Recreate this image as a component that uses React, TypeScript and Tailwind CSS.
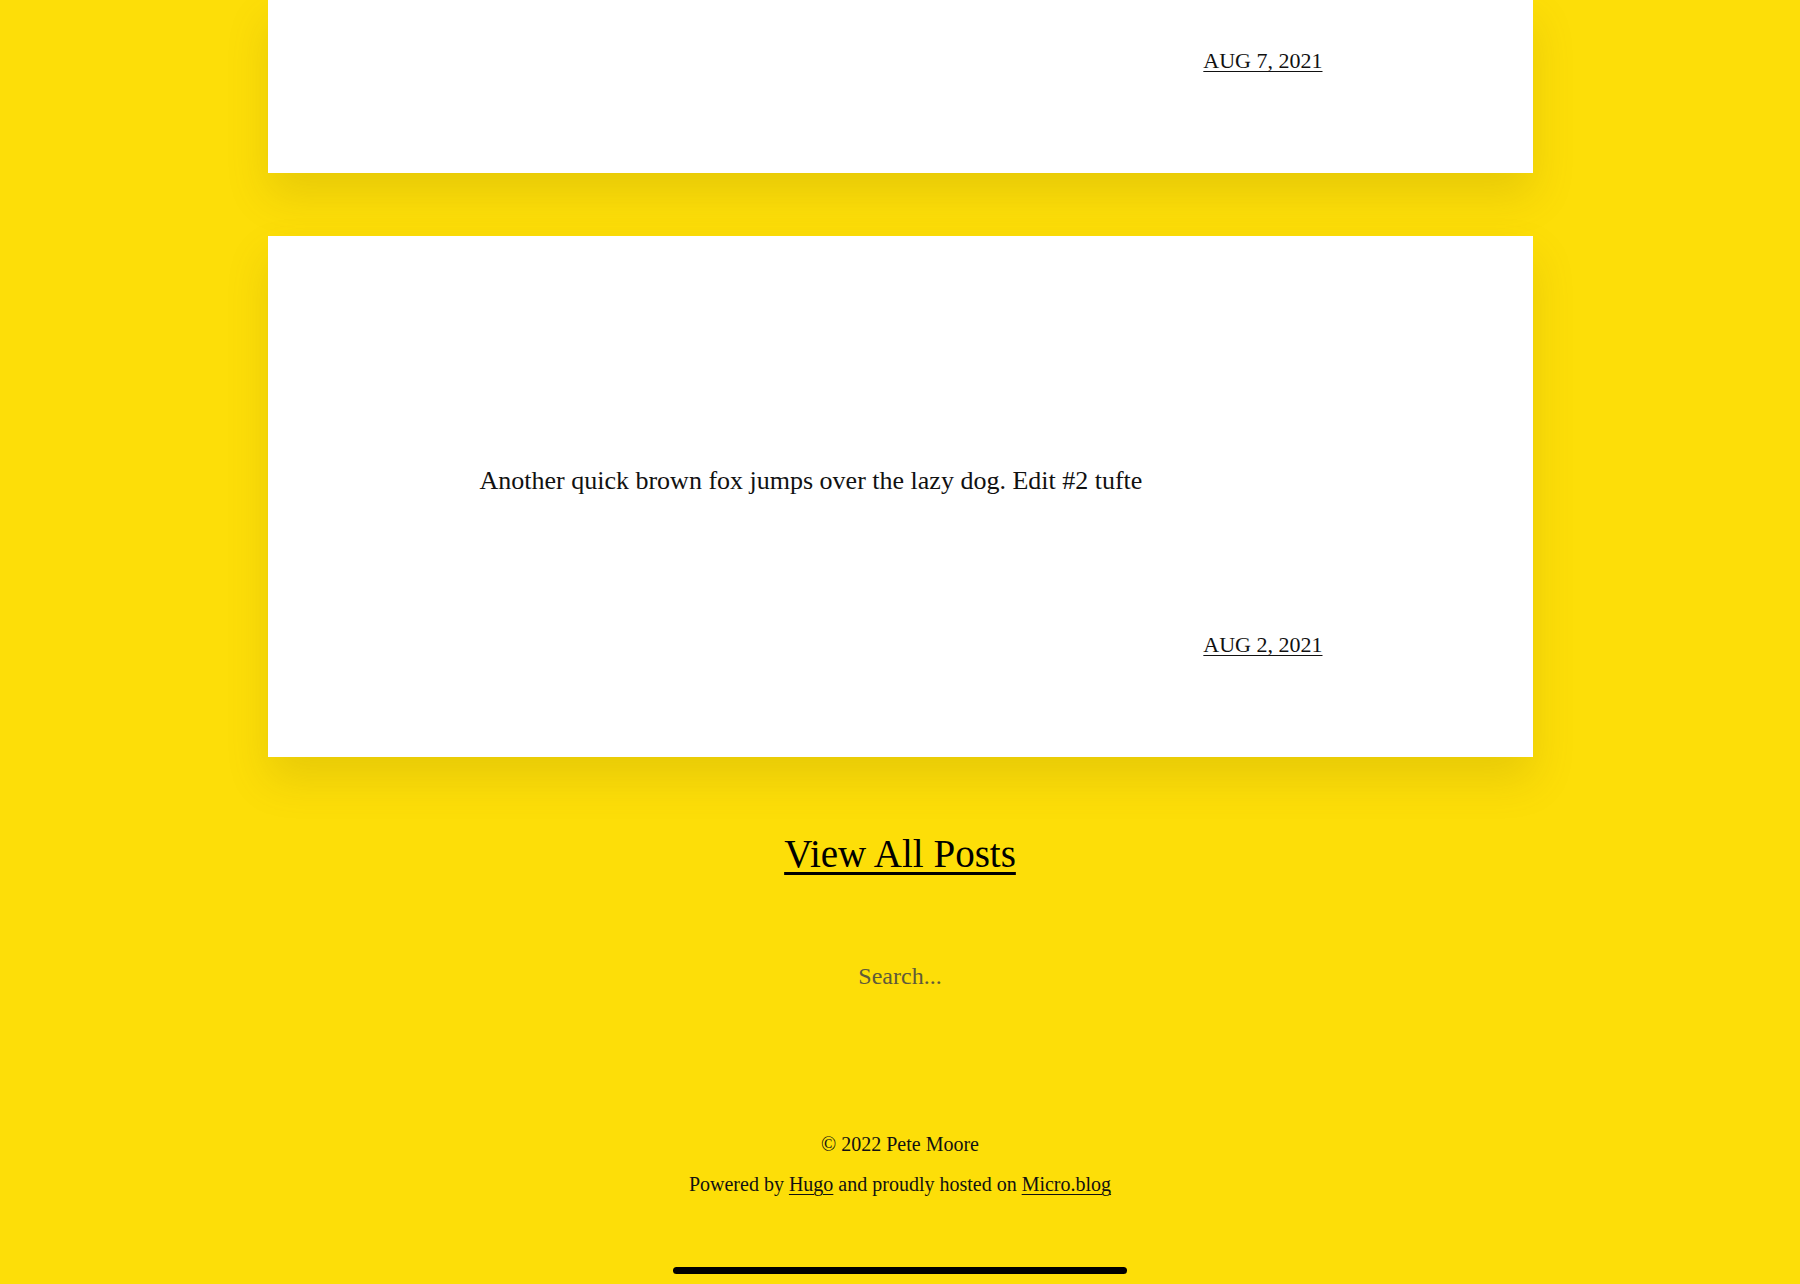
const posts = [
  { id: 1, body: "", date: "AUG 7, 2021" },
  {
    id: 2,
    body: "Another quick brown fox jumps over the lazy dog. Edit #2 tufte",
    date: "AUG 2, 2021",
  },
];

const PostCard = ({ body, date, first }: { body: string; date: string; first?: boolean }) => (
  <article
    className={`w-[1265px] bg-white shadow-[0_22px_40px_rgba(120,100,0,0.16)] pl-[212px] pr-[210px] pb-[96px] ${
      first ? "pt-[44px]" : "pt-[225px]"
    }`}
  >
    {body && <p className="text-[26px] leading-[39px] text-[#111] mb-[128px]">{body}</p>}
    <div className="flex justify-end">
      <a href="#" className="text-[22px] leading-[33px] text-[#111] underline decoration-1 underline-offset-[3px]">
        {date}
      </a>
    </div>
  </article>
);

export default function App() {
  return (
    <div
      className="min-h-[1284px] bg-[#fdde08] relative overflow-hidden"
      style={{ fontFamily: '"Liberation Serif", "Times New Roman", serif' }}
    >
      <main className="flex flex-col items-center gap-[63px]">
        {posts.map((post, i) => (
          <PostCard key={post.id} body={post.body} date={post.date} first={i === 0} />
        ))}
      </main>

      <div className="flex flex-col items-center mt-[74px]">
        <a href="#" className="text-[39px] leading-[46px] text-black underline decoration-[3px] underline-offset-[5px]">
          View All Posts
        </a>
        <input
          type="text"
          placeholder="Search..."
          className="mt-[81px] w-[300px] h-[36px] bg-transparent text-center text-[24px] text-[#111] placeholder:text-[#5f5a3a] outline-none border-0"
        />
      </div>

      <footer className="mt-[130px] flex flex-col items-center text-[20px] leading-[40px] text-[#111]">
        <p>© 2022 Pete Moore</p>
        <p>
          Powered by <a href="#" className="underline decoration-1 underline-offset-[3px]">Hugo</a> and proudly hosted on{" "}
          <a href="#" className="underline decoration-1 underline-offset-[3px]">Micro.blog</a>
        </p>
      </footer>

      <div className="absolute bottom-[10px] left-[673px] w-[454px] h-[7px] rounded-full bg-black" />
    </div>
  );
}
